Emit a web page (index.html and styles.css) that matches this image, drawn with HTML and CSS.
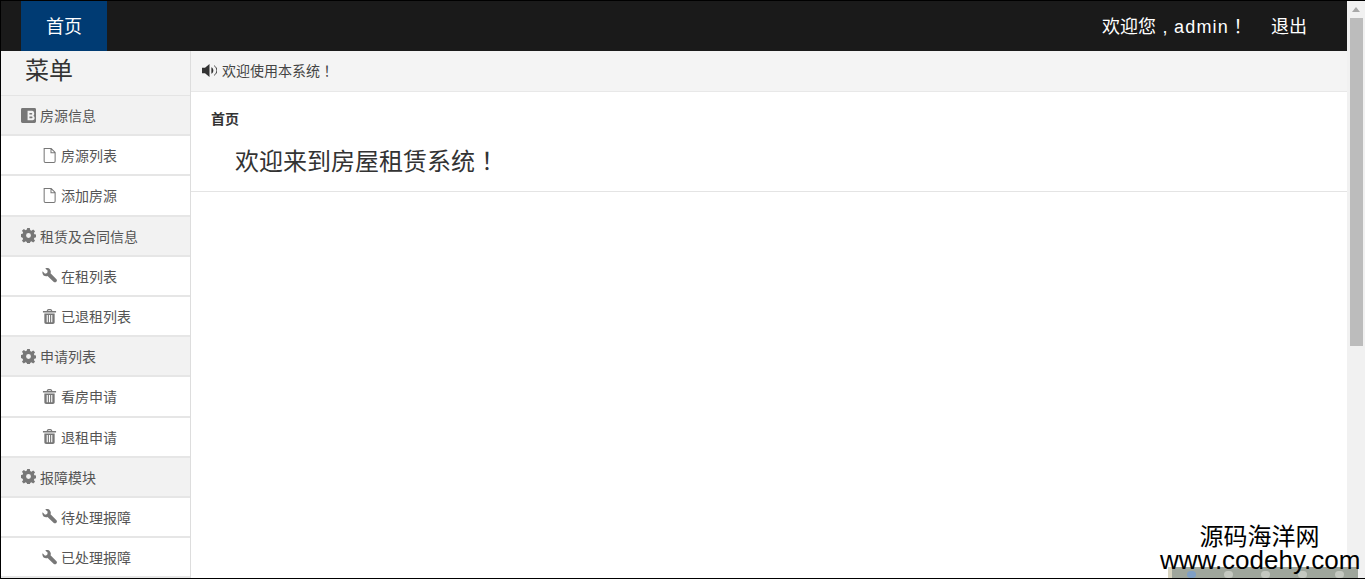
FILE: index.html
```html
<!DOCTYPE html>
<html lang="zh-CN">
<head>
    <meta charset="UTF-8">
    <meta name="viewport" content="width=device-width, initial-scale=1.0">
    <title>房屋租赁系统</title>
    <link rel="stylesheet" href="styles.css">
</head>
<body>

<svg class="icon-defs" width="0" height="0">
    <symbol id="i-file" viewBox="0 0 16 16">
        <path d="M2.300 .6h7.500l4.200 4.200v9.300a1.300 1.300 0 0 1-1.300 1.300H3.600a1.300 1.300 0 0 1-1.300-1.300z M9.600 .8v4.200h4.300" fill="none" stroke="currentColor" stroke-width="1.100"/>
    </symbol>
    <symbol id="i-cog" viewBox="0 0 16 16">
        <path fill-rule="evenodd" d="M6.600 0h2.800l.4 2.200 1.300.6 1.900-1.300 2 2-1.300 1.900.6 1.300 2.200.4v2.800l-2.200.4-.6 1.300 1.300 1.900-2 2-1.900-1.300-1.300.6-.4 2.200H6.600l-.4-2.200-1.300-.6-1.900 1.300-2-2 1.300-1.900-.6-1.300L-.5 9.400V6.600l2.200-.4.600-1.300L1 3l2-2 1.900 1.300 1.300-.6z M8 5.400a2.600 2.600 0 1 0 0 5.200 2.600 2.600 0 0 0 0-5.200z"/>
    </symbol>
    <symbol id="i-wrench" viewBox="0 0 16 16">
        <path d="M.6 3.400 3.200 6l2.300-.6L6.100 3 3.500.5C5.300-.3 7.400.1 8.500 1.500c1 1.200 1.200 2.800.6 4.100l6.300 6.300c.7.700.7 1.800 0 2.600l-.3.300c-.7.700-1.800.7-2.500 0L5.900 8.500c-1.400.5-3 .2-4.200-.5C.5 6.800.1 5 .6 3.400z"/>
    </symbol>
    <symbol id="i-trash" viewBox="0 0 16 16">
        <path fill-rule="evenodd" d="M5 2.200C5.200 .8 6 0 7 0h2c1 0 1.800.8 2 2.200h4v1.600H1V2.200z M6.300 2.200h3.400C9.600 1.600 9.300 1.200 8.800 1.200H7.200c-.5 0-.8.400-.9 1z"/>
        <path fill-rule="evenodd" d="M2.500 4.800h11v9.400c0 1-.8 1.800-1.800 1.800H4.300c-1 0-1.800-.8-1.800-1.800z M5 6.500v7.500h1.200V6.500z M7.400 6.500v7.500h1.200V6.500z M9.800 6.500v7.500H11V6.500z"/>
    </symbol>
    <symbol id="i-book" viewBox="0 0 16 16">
        <path fill-rule="evenodd" d="M1.500 0h13A1.500 1.500 0 0 1 16 1.500v13a1.500 1.500 0 0 1-1.500 1.500h-13A1.500 1.500 0 0 1 0 14.500v-13A1.500 1.500 0 0 1 1.500 0z M7 3v10h5.500c1.200 0 2-.9 2-2.300 0-1.100-.5-1.900-1.200-2.500.5-.5.8-1.300.8-2.100C14.100 4.300 13.200 3 11.800 3z M9 5.200h2.200c.5 0 .8.300.8.900s-.3.900-.8.900H9z M9 9h2.500c.5 0 .8.300.8.900s-.3.900-.8.900H9z"/>
    </symbol>
    <symbol id="i-volume" viewBox="0 0 16 16">
        <path d="M0 5h3.200L8 1v14L3.200 11H0z"/>
        <path d="M10 4.600c1.300.6 2.100 1.900 2.100 3.400s-.8 2.800-2.100 3.400z"/>
        <path d="M13 2.900c1.700 1.100 2.800 3 2.800 5.100s-1.100 4-2.800 5.100" fill="none" stroke="currentColor" stroke-width="1"/>
    </symbol>
</svg>

<div class="page">
    <div class="app">
        <div class="navbar">
            <a class="nav-home">首页</a>
            <div class="nav-user">
                <span>欢迎您<span class="comma">,</span><span class="nav-name">admin</span><span class="punct">！</span></span>
                <a class="nav-logout">退出</a>
            </div>
        </div>
        <div class="main">
            <div class="sidebar">
                <div class="menu-title">菜单</div>
                <div class="menu-group"><svg class="icon"><use href="#i-book"/></svg>房源信息</div>
                <div class="menu-item"><svg class="icon"><use href="#i-file"/></svg>房源列表</div>
                <div class="menu-item"><svg class="icon"><use href="#i-file"/></svg>添加房源</div>
                <div class="menu-group"><svg class="icon"><use href="#i-cog"/></svg>租赁及合同信息</div>
                <div class="menu-item"><svg class="icon"><use href="#i-wrench"/></svg>在租列表</div>
                <div class="menu-item"><svg class="icon"><use href="#i-trash"/></svg>已退租列表</div>
                <div class="menu-group"><svg class="icon"><use href="#i-cog"/></svg>申请列表</div>
                <div class="menu-item"><svg class="icon"><use href="#i-trash"/></svg>看房申请</div>
                <div class="menu-item"><svg class="icon"><use href="#i-trash"/></svg>退租申请</div>
                <div class="menu-group"><svg class="icon"><use href="#i-cog"/></svg>报障模块</div>
                <div class="menu-item"><svg class="icon"><use href="#i-wrench"/></svg>待处理报障</div>
                <div class="menu-item"><svg class="icon"><use href="#i-wrench"/></svg>已处理报障</div>
            </div>
            <div class="content">
                <div class="notice"><svg class="icon-volume"><use href="#i-volume"/></svg>欢迎使用本系统<span class="punct">！</span></div>
                <div class="home-panel">
                    <div class="crumb">首页</div>
                    <h2 class="welcome">欢迎来到房屋租赁系统<span class="punct">！</span></h2>
                </div>
            </div>
        </div>
    </div>
    <div class="scrollbar">
        <div class="scroll-arrow"></div>
        <div class="scroll-thumb"></div>
    </div>
</div>

<div class="watermark">
    <div class="wm-cn">源码海洋网</div>
    <div class="wm-url">www.codehy.com</div>
    <div class="wm-strip">
        <i class="wm-dot wm-dot-blue"></i>
        <i class="wm-dot"></i>
        <i class="wm-dot"></i>
        <i class="wm-dot"></i>
        <i class="wm-dot"></i>
    </div>
</div>

</body>
</html>
```

FILE: styles.css
```css
html, body {
    height: 100%;
}
body {
    margin: 0;
    overflow: hidden;
    font-family: "Liberation Sans", "Noto Sans CJK SC", Arial, sans-serif;
    color: #333;
    background-color: #fff;
}
.icon-defs {
    position: absolute;
}
/* centred full-width punctuation */
.punct {
    display: inline-block;
    line-height: 1;
    font-family: "Noto Sans CJK TC", sans-serif;
}
.comma {
    display: inline-block;
    width: 18px;
    line-height: 1;
    text-align: center;
}
.page {
    display: flex;
    height: 579px;
    box-sizing: border-box;
    border: 1px solid #000;
    border-right: none;
}
.app {
    flex: 1;
    min-width: 0;
    display: flex;
    flex-direction: column;
}
.navbar {
    height: 50px;
    flex: none;
    display: flex;
    justify-content: space-between;
    background-color: #1a1a1a;
    color: #fff;
    font-size: 18px;
}
.nav-home {
    margin-left: 20px;
    width: 86px;
    line-height: 52px;
    text-align: center;
    background-color: #003b73;
}
.nav-user {
    display: flex;
    line-height: 52px;
    padding-right: 40px;
    gap: 24px;
}
.nav-name {
    letter-spacing: 1.2px;
}
.main {
    flex: 1;
    min-height: 0;
    display: flex;
    overflow: hidden;
}
.sidebar {
    width: 190px;
    flex: none;
    box-sizing: border-box;
    border-right: 1px solid #ddd;
}
.menu-title {
    height: 45px;
    box-sizing: border-box;
    padding-left: 24px;
    font-size: 24px;
    line-height: 40px;
    background-color: #f3f3f3;
    border-bottom: 1px solid #e4e4e4;
}
.menu-group, .menu-item {
    height: 40.2px;
    box-sizing: border-box;
    display: flex;
    align-items: center;
    font-size: 14px;
    color: #555;
    border-bottom: 2px solid #e6e6e6;
}
.menu-group {
    padding-left: 20px;
    background-color: #f2f2f2;
}
.menu-item {
    padding-left: 41px;
}
.icon {
    width: 15px;
    height: 15px;
    margin-right: 4px;
    fill: #777;
    color: #777;
    flex: none;
}
.content {
    flex: 1;
    min-width: 0;
}
.notice {
    height: 38px;
    padding: 0 0 2px 11px;
    display: flex;
    align-items: center;
    font-size: 14px;
    color: #444;
    background-color: #f4f4f4;
    border-bottom: 1px solid #e8e8e8;
}
.icon-volume {
    width: 15px;
    height: 15px;
    margin-right: 5px;
    fill: #333;
    color: #333;
}
.home-panel {
    height: 100px;
    box-sizing: border-box;
    padding: 18px 0 0 20px;
    border-bottom: 1px solid #e4e4e4;
}
.crumb {
    font-size: 14px;
    font-weight: bold;
    line-height: 18px;
}
.welcome {
    margin: 19px 0 0 24px;
    font-size: 24px;
    font-weight: normal;
    line-height: 30px;
}
.scrollbar {
    width: 18px;
    flex: none;
    background-color: #f1f1f1;
    display: flex;
    flex-direction: column;
    align-items: center;
}
.scroll-arrow {
    margin-top: 6px;
    height: 0;
    width: 0;
    border: 4px solid transparent;
    border-top: none;
    border-bottom: 5px solid #a8a8a8;
}
.scroll-thumb {
    margin-top: 6px;
    width: 13px;
    height: 328px;
    background-color: #bcbcbc;
}
.watermark {
    position: absolute;
    right: 0;
    bottom: 0;
    width: 205px;
    height: 54px;
    color: #000;
    text-align: center;
}
.wm-cn {
    font-size: 24px;
    line-height: 24px;
    padding-right: 6px;
}
.wm-url {
    font-size: 26px;
    line-height: 22px;
    padding-right: 5px;
    position: relative;
    z-index: 1;
}
.wm-strip {
    position: absolute;
    left: 8px;
    right: 7px;
    bottom: 1px;
    height: 11px;
    box-sizing: border-box;
    padding: 4px 0 0 15px;
    display: flex;
    gap: 28px;
    background-color: #9fa69c;
    border-left: 4px solid #d8d4c0;
}
.wm-dot {
    width: 9px;
    height: 7px;
    border-radius: 4px;
    background-color: #c4c8c0;
}
.wm-dot-blue {
    background-color: #7f9fc4;
}
```
